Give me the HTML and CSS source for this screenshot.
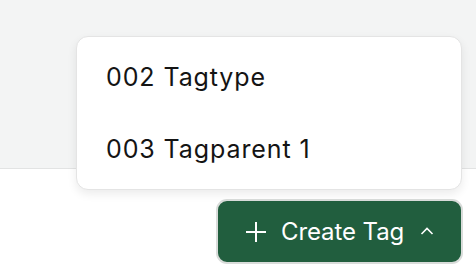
FILE: index.html
```html
<!DOCTYPE html>
<html lang="en">
<head>
  <meta charset="UTF-8" />
  <title>Create Tag</title>
  <link rel="stylesheet" href="styles.css">
</head>
<body>
  <div class="page-top"></div>

  <div class="page-bottom">
    <div class="create-wrap">
      <ul class="tag-menu">
        <li>002 Tagtype</li>
        <li>003 Tagparent 1</li>
      </ul>
      <button class="create-btn">
        <svg class="plus" width="22" height="22" viewBox="0 0 22 22">
          <path d="M11 1v20M1 11h20" stroke="#fff" stroke-width="2" fill="none" />
        </svg>
        <span>Create Tag</span>
        <svg class="chev" width="14" height="8" viewBox="0 0 14 8">
          <path d="M1.5 7L7 1.5 12.5 7" stroke="#fff" stroke-width="1.6" fill="none" />
        </svg>
      </button>
    </div>
  </div>
</body>
</html>
```

FILE: styles.css
```css
body { margin: 0; background: #fff; font-family: Inter, "Noto Sans", sans-serif; color: #141414; }
.page-top { height: 168px; background: #f3f4f4; border-bottom: 1px solid #e2e3e3; }
.page-bottom { display: flex; justify-content: flex-end; padding: 30px 13px 0 0; }
.create-wrap { position: relative; }
.tag-menu { position: absolute; right: 1px; bottom: 74px; width: 384px; margin: 0; padding: 4px 0; list-style: none; background: #fff; border: 1px solid #e4e4e4; border-radius: 12px; box-shadow: 0 4px 10px rgba(0,0,0,0.08); }
.tag-menu li { height: 72px; display: flex; align-items: center; padding-left: 29px; font-size: 25px; letter-spacing: 0.9px; }
.create-btn { display: flex; align-items: center; width: 247px; height: 65px; padding: 0 0 0 27px; background: #215e3e; color: #fff; border: 2px solid #d9dcda; border-radius: 11px; font-family: Inter, "Noto Sans", sans-serif; font-size: 24px; letter-spacing: -0.1px; }
.create-btn .plus { margin-right: 14px; }
.create-btn .chev { margin-left: 16px; margin-top: -2px; }
```
